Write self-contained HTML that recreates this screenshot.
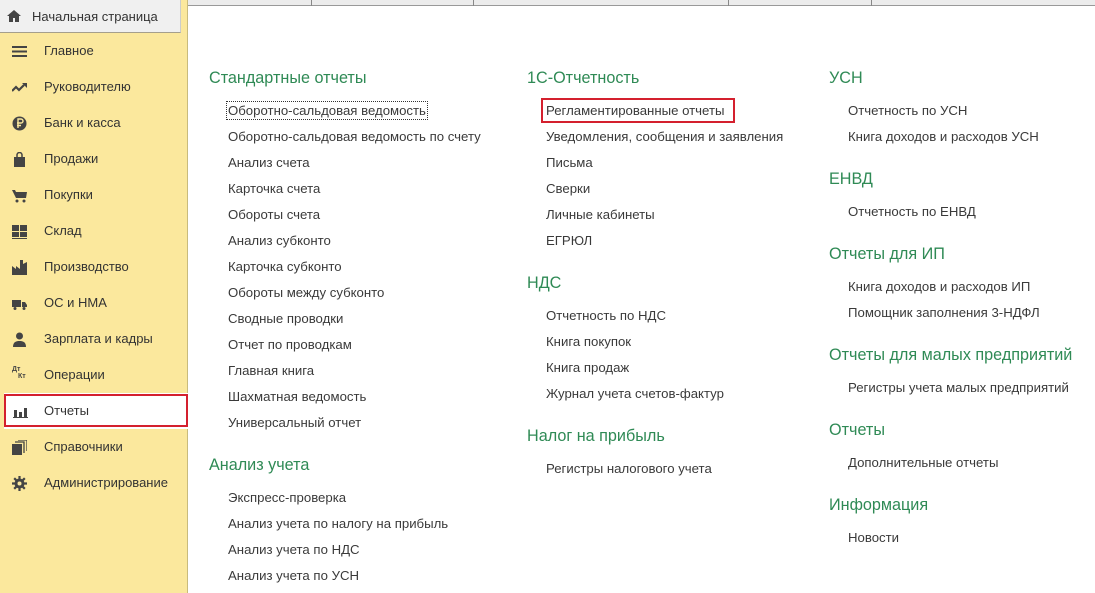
<!DOCTYPE html>
<html><head><meta charset="utf-8"><style>
*{margin:0;padding:0;box-sizing:border-box}
body{width:1095px;height:593px;overflow:hidden;background:#fff;font-family:"Liberation Sans",Arial,sans-serif;position:relative;color:#333}
#side{position:absolute;left:0;top:0;width:188px;height:593px;background:#fbe89d;border-right:1px solid #c9bb7c}
#home{position:absolute;left:0;top:0;width:181px;height:33px;background:#f0f0f0;border-bottom:1px solid #a59f8c;border-right:1px solid #ccc;font-size:13px;line-height:33px;padding-left:32px;color:#333}
.si{position:absolute;left:0;width:188px;height:36px;font-size:13px;line-height:36px;padding-left:44px;color:#333}
.ic{position:absolute;left:12px;top:11px;width:15px;height:15px}
#tabs{position:absolute;left:188px;top:0;right:0;height:6px;background:#ececec;border-bottom:1px solid #999}
.tsep{position:absolute;top:0;width:1px;height:6px;background:#888}
.h{position:absolute;font-size:16.2px;color:#2f8a55;white-space:nowrap}
.it{position:absolute;font-size:13.2px;color:#3a3a3a;white-space:nowrap}
.red{position:absolute;border:2px solid #d4202e}
</style></head><body>
<div id="side">
<div id="home"><svg style="position:absolute;left:7px;top:10px" width="14" height="12" viewBox="0 0 14 12"><path d="M7 0L0 6h2v6h4V8h2v4h4V6h2z" fill="#444"/></svg>Начальная страница</div>
<div class="si" style="top:33px"><svg class="ic" viewBox="0 0 15 15"><path d="M0 2h15v2H0zM0 6.5h15v2H0zM0 11h15v2H0z" fill="#444"/></svg>Главное</div>
<div class="si" style="top:69px"><svg class="ic" viewBox="0 0 15 15"><path d="M0 11l4-4 3 3 5-5" stroke="#444" stroke-width="2.2" fill="none"/><path d="M10 3h5v5z" fill="#444"/></svg>Руководителю</div>
<div class="si" style="top:105px"><svg class="ic" viewBox="0 0 15 15"><circle cx="7.5" cy="7.5" r="7" fill="#444"/><path d="M6 12V3h3a2 2 0 010 4H5M5 9.5h4" stroke="#fbe89d" stroke-width="1.4" fill="none"/></svg>Банк и касса</div>
<div class="si" style="top:141px"><svg class="ic" viewBox="0 0 15 15"><path d="M2 5h11v10H2z" fill="#444"/><path d="M5 6V3a2.5 2.5 0 015 0v3" stroke="#444" stroke-width="1.5" fill="none"/></svg>Продажи</div>
<div class="si" style="top:177px"><svg class="ic" viewBox="0 0 15 15"><path d="M0 2h3l1 2h11l-1 6H4z" fill="#444"/><circle cx="5" cy="13" r="1.5" fill="#444"/><circle cx="12" cy="13" r="1.5" fill="#444"/></svg>Покупки</div>
<div class="si" style="top:213px"><svg class="ic" viewBox="0 0 15 15"><path d="M0 1h7v6H0zM8 1h7v6H8zM0 8h7v5H0zM8 8h7v5H8zM0 14h15v1H0z" fill="#444"/></svg>Склад</div>
<div class="si" style="top:249px"><svg class="ic" viewBox="0 0 15 15"><path d="M0 15V6l4 3V6l4 3V0h3v4l4-2v13z" fill="#444"/></svg>Производство</div>
<div class="si" style="top:285px"><svg class="ic" viewBox="0 0 15 15"><path d="M0 4h9v7H0zM10 6h3l2 3v2h-5z" fill="#444"/><circle cx="3" cy="12.5" r="1.5" fill="#444"/><circle cx="12" cy="12.5" r="1.5" fill="#444"/></svg>ОС и НМА</div>
<div class="si" style="top:321px"><svg class="ic" viewBox="0 0 15 15"><circle cx="7.5" cy="4" r="3.5" fill="#444"/><path d="M1 15c0-5 3-6 6.5-6s6.5 1 6.5 6z" fill="#444"/></svg>Зарплата и кадры</div>
<div class="si" style="top:357px"><span style="position:absolute;left:12px;top:-5px;font-size:7px;font-weight:bold;color:#444">Дт</span><span style="position:absolute;left:18px;top:2px;font-size:7px;font-weight:bold;color:#444">Кт</span>Операции</div>
<div class="si" style="top:393px;background:#fff;left:4px;width:184px;padding-left:40px"><svg class="ic" style="left:9px" viewBox="0 0 15 15"><path d="M1 6h3v7H1zM6 8h3v5H6zM11 4h3v9h-3zM0 13h15v1H0z" fill="#444"/></svg>Отчеты</div>
<div class="red" style="left:4px;top:394px;width:184px;height:33px"></div>
<div class="si" style="top:429px"><svg class="ic" viewBox="0 0 15 15"><path d="M0 4h10v11H0z" fill="#444"/><path d="M3 2h9v11M6 0h9v11" stroke="#444" stroke-width="1.3" fill="none"/></svg>Справочники</div>
<div class="si" style="top:465px"><svg class="ic" viewBox="0 0 15 15"><circle cx="7.5" cy="7.5" r="5" fill="#444"/><path d="M7.5 0v15M0 7.5h15M2.2 2.2l10.6 10.6M12.8 2.2L2.2 12.8" stroke="#444" stroke-width="2.2"/><circle cx="7.5" cy="7.5" r="2" fill="#fbe89d"/></svg>Администрирование</div>
</div>
<div id="tabs"><div class="tsep" style="left:123px"></div><div class="tsep" style="left:285px"></div><div class="tsep" style="left:540px"></div><div class="tsep" style="left:683px"></div></div>

<div class="h" style="left:209px;top:69px">Стандартные отчеты</div>
<div class="it" style="left:228px;top:103px;outline:1px dotted #333;outline-offset:1px">Оборотно-сальдовая ведомость</div>
<div class="it" style="left:228px;top:129px">Оборотно-сальдовая ведомость по счету</div>
<div class="it" style="left:228px;top:155px">Анализ счета</div>
<div class="it" style="left:228px;top:181px">Карточка счета</div>
<div class="it" style="left:228px;top:207px">Обороты счета</div>
<div class="it" style="left:228px;top:233px">Анализ субконто</div>
<div class="it" style="left:228px;top:259px">Карточка субконто</div>
<div class="it" style="left:228px;top:285px">Обороты между субконто</div>
<div class="it" style="left:228px;top:311px">Сводные проводки</div>
<div class="it" style="left:228px;top:337px">Отчет по проводкам</div>
<div class="it" style="left:228px;top:363px">Главная книга</div>
<div class="it" style="left:228px;top:389px">Шахматная ведомость</div>
<div class="it" style="left:228px;top:415px">Универсальный отчет</div>
<div class="h" style="left:209px;top:456px">Анализ учета</div>
<div class="it" style="left:228px;top:490px">Экспресс-проверка</div>
<div class="it" style="left:228px;top:516px">Анализ учета по налогу на прибыль</div>
<div class="it" style="left:228px;top:542px">Анализ учета по НДС</div>
<div class="it" style="left:228px;top:568px">Анализ учета по УСН</div>

<div class="h" style="left:527px;top:69px">1С-Отчетность</div>
<div class="it" style="left:546px;top:103px">Регламентированные отчеты</div>
<div class="red" style="left:541px;top:98px;width:194px;height:25px"></div>
<div class="it" style="left:546px;top:129px">Уведомления, сообщения и заявления</div>
<div class="it" style="left:546px;top:155px">Письма</div>
<div class="it" style="left:546px;top:181px">Сверки</div>
<div class="it" style="left:546px;top:207px">Личные кабинеты</div>
<div class="it" style="left:546px;top:233px">ЕГРЮЛ</div>
<div class="h" style="left:527px;top:274px">НДС</div>
<div class="it" style="left:546px;top:308px">Отчетность по НДС</div>
<div class="it" style="left:546px;top:334px">Книга покупок</div>
<div class="it" style="left:546px;top:360px">Книга продаж</div>
<div class="it" style="left:546px;top:386px">Журнал учета счетов-фактур</div>
<div class="h" style="left:527px;top:427px">Налог на прибыль</div>
<div class="it" style="left:546px;top:461px">Регистры налогового учета</div>

<div class="h" style="left:829px;top:69px">УСН</div>
<div class="it" style="left:848px;top:103px">Отчетность по УСН</div>
<div class="it" style="left:848px;top:129px">Книга доходов и расходов УСН</div>
<div class="h" style="left:829px;top:170px">ЕНВД</div>
<div class="it" style="left:848px;top:204px">Отчетность по ЕНВД</div>
<div class="h" style="left:829px;top:245px">Отчеты для ИП</div>
<div class="it" style="left:848px;top:279px">Книга доходов и расходов ИП</div>
<div class="it" style="left:848px;top:305px">Помощник заполнения 3-НДФЛ</div>
<div class="h" style="left:829px;top:346px">Отчеты для малых предприятий</div>
<div class="it" style="left:848px;top:380px">Регистры учета малых предприятий</div>
<div class="h" style="left:829px;top:421px">Отчеты</div>
<div class="it" style="left:848px;top:455px">Дополнительные отчеты</div>
<div class="h" style="left:829px;top:496px">Информация</div>
<div class="it" style="left:848px;top:530px">Новости</div>
</body></html>
